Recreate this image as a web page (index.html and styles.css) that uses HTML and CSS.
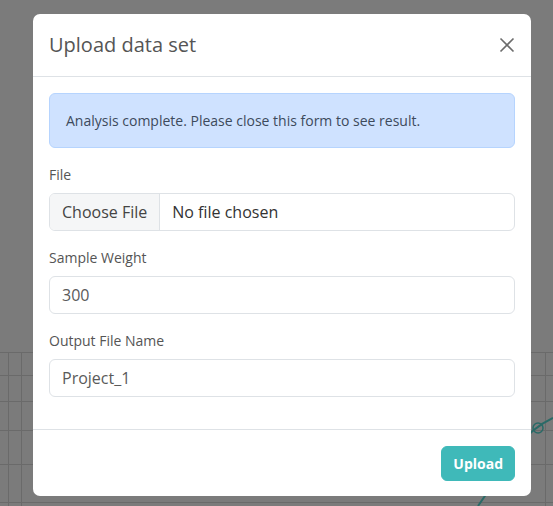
FILE: index.html
```html
<!DOCTYPE html>
<html>
<head>
<meta charset="utf-8">
<link rel="stylesheet" href="styles.css">
</head>
<body>
<div class="page">
  <div class="backdrop"></div>
  <svg class="chart" width="553" height="506" viewBox="0 0 553 506">
    <g stroke="#6a6a6a" stroke-width="1">
      <line x1="0" y1="352.5" x2="553" y2="352.5"/>
      <line x1="0" y1="375.5" x2="553" y2="375.5"/>
      <line x1="0" y1="401.5" x2="553" y2="401.5"/>
      <line x1="0" y1="430.5" x2="553" y2="430.5"/>
      <line x1="0" y1="464.5" x2="553" y2="464.5"/>
      <line x1="0" y1="502.5" x2="553" y2="502.5"/>
      <line x1="8.5" y1="352" x2="8.5" y2="506"/>
      <line x1="21.5" y1="352" x2="21.5" y2="506"/>
      <line x1="545.5" y1="352" x2="545.5" y2="506"/>
    </g>
    <path d="M478 506 L520 445 Q532 428 553 418" fill="none" stroke="#2a6a67" stroke-width="2"/>
    <circle cx="538" cy="428" r="5" fill="none" stroke="#2a6a67" stroke-width="1.5"/>
  </svg>
  <div class="modal">
    <div class="modal-header">
      <h5 class="modal-title">Upload data set</h5>
      <button class="close" type="button" aria-label="Close">
        <svg width="16" height="16" viewBox="0 0 16 16"><path d="M1.5 1.5 L14.5 14.5 M14.5 1.5 L1.5 14.5" stroke="#6c6c6c" stroke-width="1.6" fill="none"/></svg>
      </button>
    </div>
    <div class="modal-body">
      <div class="alert">Analysis complete. Please close this form to see result.</div>
      <div class="group">
        <label class="label">File</label>
        <div class="file-input">
          <span class="file-btn">Choose File</span>
          <span class="file-name">No file chosen</span>
        </div>
      </div>
      <div class="group">
        <label class="label">Sample Weight</label>
        <div class="input">300</div>
      </div>
      <div class="group">
        <label class="label">Output File Name</label>
        <div class="input">Project_1</div>
      </div>
    </div>
    <div class="modal-footer">
      <button class="btn-upload" type="button">Upload</button>
    </div>
  </div>
</div>
</body>
</html>
```
FILE: styles.css
```css
* { box-sizing: border-box; }
html, body { margin: 0; padding: 0; }
body {
  width: 553px;
  height: 506px;
  overflow: hidden;
  font-family: "Open Sans", "Noto Sans", sans-serif;
  font-size: 14px;
  line-height: 1.5;
  color: #555;
  background: #fff;
}
.page {
  position: relative;
  width: 553px;
  height: 506px;
  padding: 14px 0 0 33px;
}
.backdrop {
  position: absolute;
  inset: 0;
  background: #7b7b7b;
  z-index: 1;
}
.chart {
  position: absolute;
  left: 0;
  top: 0;
  z-index: 2;
}
.modal {
  position: relative;
  z-index: 3;
  width: 498px;
  height: 482px;
  background: #fff;
  border-radius: 7px;
  display: flex;
  flex-direction: column;
}
.modal-header {
  display: flex;
  align-items: center;
  justify-content: space-between;
  padding: 16px;
  border-bottom: 1px solid #dee2e6;
}
.modal-title {
  margin: 0;
  font-size: 20px;
  font-weight: 400;
  line-height: 30px;
  color: #555;
}
.close {
  border: 0;
  background: none;
  padding: 0;
  width: 16px;
  height: 16px;
  display: flex;
}
.modal-body {
  padding: 16px;
  flex: 1;
}
.alert {
  background: #cfe2ff;
  border: 1px solid #b6d4fe;
  border-radius: 6px;
  padding: 16px;
  color: #3d4a5c;
  font-size: 14px;
  line-height: 21px;
  margin-bottom: 16px;
}
.group { margin-bottom: 16px; }
.label {
  display: block;
  margin-bottom: 8px;
  font-size: 14px;
  line-height: 21px;
  color: #555;
}
.input, .file-input {
  height: 38px;
  border: 1px solid #dee2e6;
  border-radius: 6px;
  font-size: 16px;
  line-height: 24px;
  color: #5a5a5a;
  background: #fff;
}
.input {
  padding: 6px 12px;
}
.file-input {
  display: flex;
  overflow: hidden;
}
.file-btn {
  padding: 6px 12px;
  background: #f5f6f7;
  border-right: 1px solid #dee2e6;
  color: #444;
}
.file-name {
  padding: 6px 12px;
  color: #333;
}
.modal-footer {
  display: flex;
  justify-content: flex-end;
  padding: 16px;
  border-top: 1px solid #dee2e6;
}
.btn-upload {
  font-family: "Open Sans", "Noto Sans", sans-serif;
  font-weight: 700;
  font-size: 14px;
  line-height: 21px;
  color: #fff;
  background: #3fb9b9;
  border: 1px solid #3fb9b9;
  border-radius: 6px;
  padding: 6px 11px;
}
```
